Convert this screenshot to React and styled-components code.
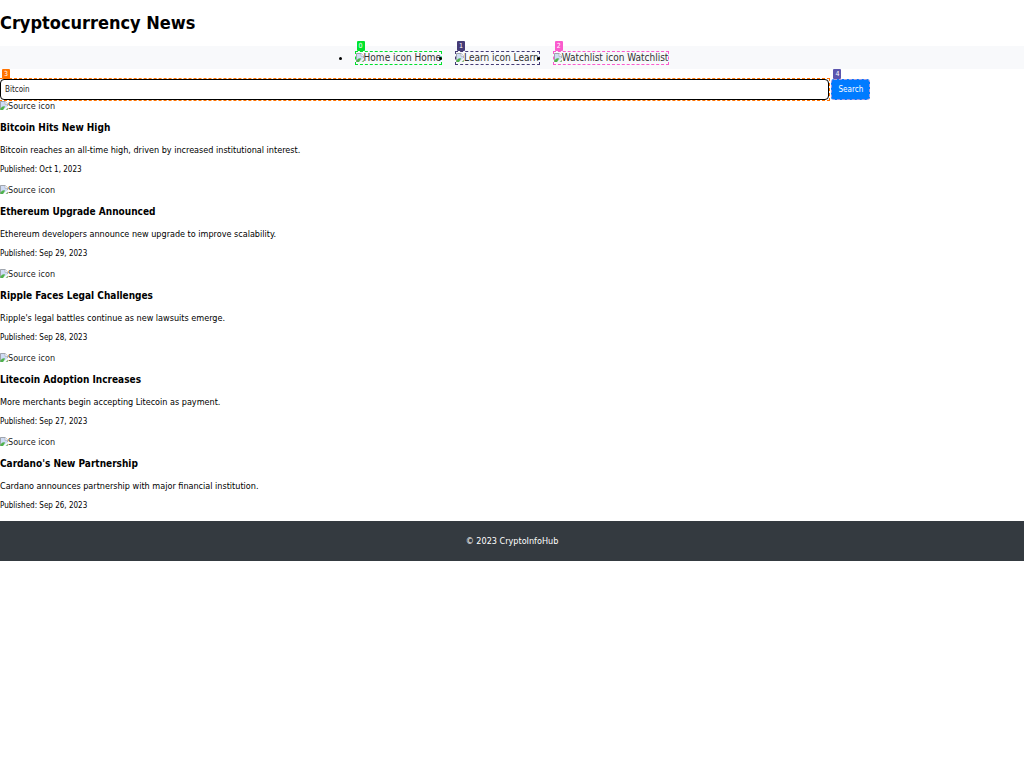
import React from 'react';
import styled, { createGlobalStyle } from 'styled-components';

const GlobalStyle = createGlobalStyle`
  *, *::before, *::after { box-sizing: border-box; }
  body {
    margin: 0;
    background: #fff;
    color: #000;
    font: 9px/12px "DejaVu Sans Condensed", "DejaVu Sans", sans-serif;
  }
`;

const Title = styled.h1`
  margin: 0;
  padding: 12px 0;
  font-size: 18px;
  line-height: 22px;
`;

const Nav = styled.nav`
  background: #f8f9fb;
`;

const NavList = styled.ul`
  display: flex;
  justify-content: center;
  gap: 13px;
  margin: 0;
  padding: 5px 0 4px;
  list-style: none;
`;

const NavItem = styled.li`
  position: relative;
  &::before {
    content: '';
    position: absolute;
    top: 6px;
    left: -16px;
    width: 3px;
    height: 3px;
    border-radius: 50%;
    background: #000;
  }
`;

const NavLink = styled.a`
  display: flex;
  align-items: center;
  height: 14px;
  border: 1px dashed ${(p) => p.$color};
  color: #333;
  font-size: 10px;
  text-decoration: none;
  white-space: pre;
`;

const Badge = styled.span`
  position: absolute;
  top: -10px;
  left: 2px;
  width: 8px;
  height: 10px;
  border-radius: 1px;
  background: ${(p) => p.$color};
  color: #fff;
  font-size: 7px;
  line-height: 10px;
  text-align: center;
`;

const SearchForm = styled.form`
  display: flex;
  gap: 2px;
  width: 85%;
  padding-top: 10px;
`;

const Field = styled.label`
  position: relative;
  flex: 1;
  display: flex;
  outline: 1px dashed #ff7300;
`;

const SearchInput = styled.input`
  flex: 1;
  min-width: 0;
  height: 21px;
  padding: 0 4px;
  border: 1px solid #000;
  border-radius: 4px;
  background: #fff;
  color: #222;
  font: inherit;
  font-size: 8px;
  outline: none;
`;

const ButtonWrap = styled.div`
  position: relative;
  display: flex;
`;

const SearchButton = styled.button`
  width: 39px;
  height: 21px;
  padding: 0;
  border: 1px dashed #a49be0;
  border-radius: 3px;
  background: #007bff;
  color: #fff;
  font: inherit;
  font-size: 8px;
`;

const NewsList = styled.main`
  padding-bottom: 1px;
`;

const Article = styled.article`
  padding-bottom: 9px;
`;

const Source = styled.div`
  display: flex;
  align-items: center;
  height: 12px;
  color: #222;
`;

const Headline = styled.h3`
  margin: 9px 0;
  font-size: 10px;
  line-height: 14px;
`;

const Summary = styled.p`
  margin: 0 0 9px;
`;

const Published = styled.small`
  display: block;
  font-size: 8px;
  line-height: 10px;
`;

const Footer = styled.footer`
  padding: 14px;
  background: #343a40;
  color: #fff;
  text-align: center;
`;

const BrokenIcon = styled.svg`
  flex: none;
  width: 8px;
  height: 9px;
  margin-bottom: 1px;
`;

function MissingImage() {
  return (
    <BrokenIcon viewBox="0 0 8 9" aria-hidden="true">
      <path d="M0 0h5l3 3v2L3 9H0z" fill="#cfdcf5" />
      <path d="M0.5 9V0.5h4.7L7.5 3.2v1.6" fill="none" stroke="#a0a5ac" />
      <path d="M5 0.5v2.8h3" fill="#fff" stroke="#a9aeb5" strokeWidth="0.7" />
      <path d="M0.5 9V7.4Q2.5 4.4 5.2 5.6L3 9z" fill="#4fb34a" />
      <path d="M5.5 9L8 6.6V9z" fill="#8dbb89" />
    </BrokenIcon>
  );
}

const links = [
  { name: 'Home', color: '#00e32d' },
  { name: 'Learn', color: '#453b76' },
  { name: 'Watchlist', color: '#fa5bcd' },
];

const articles = [
  ['Bitcoin Hits New High', 'Bitcoin reaches an all-time high, driven by increased institutional interest.', 'Oct 1, 2023'],
  ['Ethereum Upgrade Announced', 'Ethereum developers announce new upgrade to improve scalability.', 'Sep 29, 2023'],
  ['Ripple Faces Legal Challenges', "Ripple's legal battles continue as new lawsuits emerge.", 'Sep 28, 2023'],
  ['Litecoin Adoption Increases', 'More merchants begin accepting Litecoin as payment.', 'Sep 27, 2023'],
  ["Cardano's New Partnership", 'Cardano announces partnership with major financial institution.', 'Sep 26, 2023'],
];

export default function App() {
  return (
    <>
      <GlobalStyle />
      <Title>Cryptocurrency News</Title>
      <Nav>
        <NavList>
          {links.map(({ name, color }, i) => (
            <NavItem key={name}>
              <NavLink href="#" $color={color}>
                <MissingImage />
                {`${name} icon ${name}`}
              </NavLink>
              <Badge $color={color}>{i}</Badge>
            </NavItem>
          ))}
        </NavList>
      </Nav>
      <SearchForm onSubmit={(e) => e.preventDefault()}>
        <Field>
          <SearchInput type="text" aria-label="Search news" defaultValue="Bitcoin" />
          <Badge $color="#ff7300">3</Badge>
        </Field>
        <ButtonWrap>
          <SearchButton type="submit">Search</SearchButton>
          <Badge $color="#5b55ae">4</Badge>
        </ButtonWrap>
      </SearchForm>
      <NewsList>
        {articles.map(([title, summary, date]) => (
          <Article key={title}>
            <Source><MissingImage />Source icon</Source>
            <Headline>{title}</Headline>
            <Summary>{summary}</Summary>
            <Published>Published: {date}</Published>
          </Article>
        ))}
      </NewsList>
      <Footer>© 2023 CryptoInfoHub</Footer>
    </>
  );
}
